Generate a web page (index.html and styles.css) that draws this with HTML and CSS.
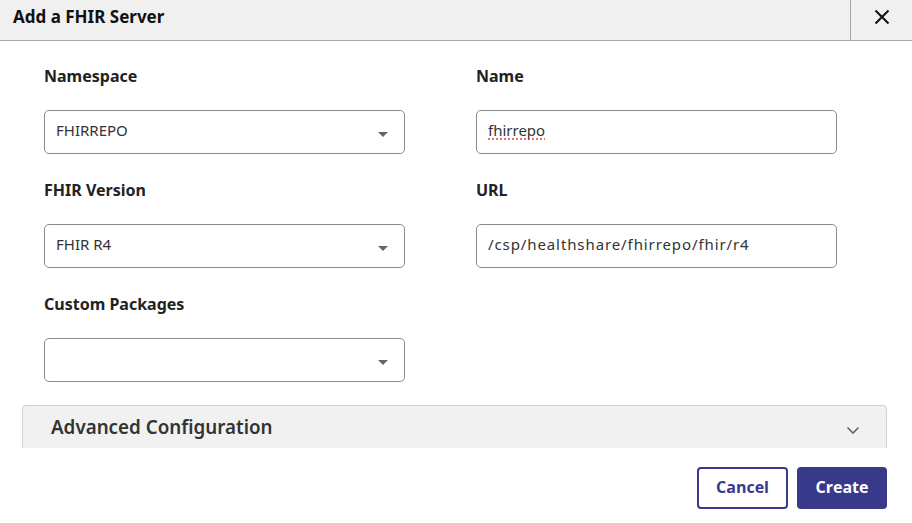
FILE: index.html
```html
<!DOCTYPE html>
<html>
<head>
<meta charset="utf-8">
<link rel="stylesheet" href="styles.css">
</head>
<body>
<div class="dialog">
  <div class="header">
    <div class="title">Add a FHIR Server</div>
    <div class="close">
      <svg width="16" height="16" viewBox="0 0 16 16"><path d="M1.5 1.5 L14.5 14.5 M14.5 1.5 L1.5 14.5" stroke="#111" stroke-width="2" fill="none"/></svg>
    </div>
  </div>
  <div class="form">
    <div class="field">
      <div class="label">Namespace</div>
      <div class="control select"><span>FHIRREPO</span><span class="caret"></span></div>
    </div>
    <div class="field">
      <div class="label">Name</div>
      <div class="control"><span class="spell">fhirrepo</span></div>
    </div>
    <div class="field">
      <div class="label">FHIR Version</div>
      <div class="control select"><span>FHIR R4</span><span class="caret"></span></div>
    </div>
    <div class="field">
      <div class="label">URL</div>
      <div class="control"><span class="url">/csp/healthshare/fhirrepo/fhir/r4</span></div>
    </div>
    <div class="field">
      <div class="label">Custom Packages</div>
      <div class="control select"><span></span><span class="caret"></span></div>
    </div>
  </div>
  <div class="advanced">
    <span>Advanced Configuration</span>
    <svg class="chev" width="14" height="9" viewBox="0 0 14 9"><path d="M1.5 1.5 L7 7 L12.5 1.5" stroke="#666" stroke-width="1.6" fill="none"/></svg>
  </div>
  <div class="footer">
    <button class="btn cancel">Cancel</button>
    <button class="btn create">Create</button>
  </div>
</div>
</body>
</html>
```
FILE: styles.css
```css
* { box-sizing: border-box; }
html, body { margin: 0; padding: 0; background: #fff; }
body { font-family: "Noto Sans", "Open Sans", sans-serif; color: #222; width: 912px; height: 523px; overflow: hidden; }
.dialog { width: 912px; }
.header { height: 41px; background: #f0f0f0; border-bottom: 1px solid #a8a8a8; display: flex; align-items: stretch; }
.title { flex: 1; padding-left: 13px; font-size: 17px; font-weight: 700; line-height: 34px; color: #111; }
.close { width: 62px; border-left: 1px solid #a8a8a8; display: flex; align-items: center; justify-content: center; padding-bottom: 7px; }
.form { display: grid; grid-template-columns: 361px 361px; column-gap: 71px; row-gap: 26px; padding: 25px 0 0 44px; }
.label { font-size: 16px; font-weight: 700; line-height: 20px; height: 20px; margin-bottom: 24px; color: #222; }
.control { height: 44px; border: 1px solid #8a8a8a; border-radius: 5px; display: flex; align-items: center; justify-content: space-between; padding: 0 16px 0 11px; font-size: 15px; color: #333; }
.control span { position: relative; top: -2px; }
.url { letter-spacing: 0.9px; }
.spell { text-decoration: underline dotted #e04040; text-underline-offset: 3px; }
.caret { width: 0; height: 0; border-left: 5px solid transparent; border-right: 5px solid transparent; border-top: 5px solid #666; top: 2px !important; }
.advanced { margin: 23px 25px 0 22px; height: 43px; background: #f1f1f1; border: 1px solid #d2d2d2; border-bottom: none; border-radius: 4px 4px 0 0; display: flex; align-items: center; justify-content: space-between; padding: 0 26px 0 28px; font-size: 18.8px; font-weight: 600; color: #333; }
.advanced span { position: relative; top: 0; }
.chev { position: relative; top: 3px; }
.footer { display: flex; justify-content: flex-end; gap: 9px; padding: 19px 25px 0 0; }
.btn { height: 42px; border-radius: 4px; font-family: "Open Sans", "Noto Sans", sans-serif; font-size: 16px; font-weight: 700; padding: 0 0 2px; cursor: pointer; }
.cancel { width: 91px; background: #fff; color: #39398c; border: 2px solid #39398c; }
.create { width: 90px; background: #39398c; color: #fff; border: none; }
```
